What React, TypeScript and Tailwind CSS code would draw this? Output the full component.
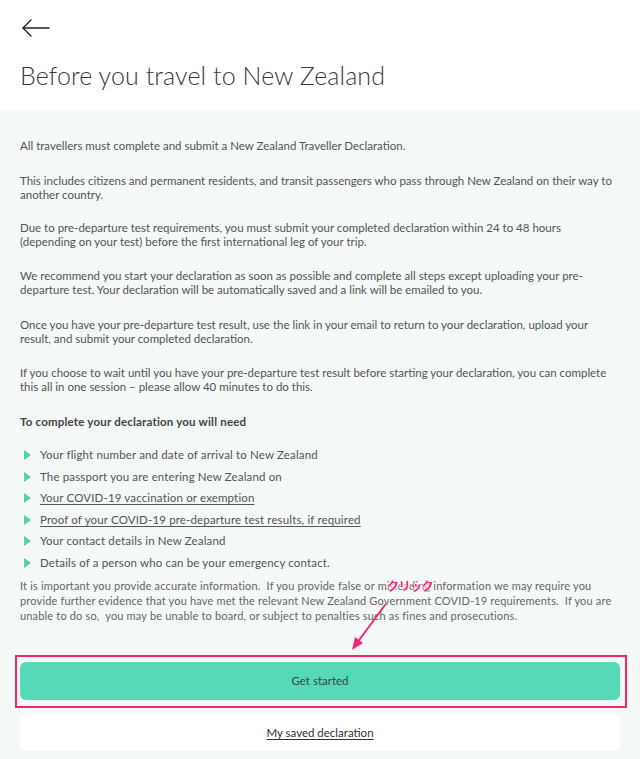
import React from 'react';

const Bullet = () => (
  <svg width="7" height="10" viewBox="0 0 7 10" className="shrink-0">
    <path d="M0 0 L7 5 L0 10 Z" fill="#4fd3ab" />
  </svg>
);

const items: { text: string; link?: boolean }[] = [
  { text: 'Your flight number and date of arrival to New Zealand' },
  { text: 'The passport you are entering New Zealand on' },
  { text: 'Your COVID-19 vaccination or exemption', link: true },
  { text: 'Proof of your COVID-19 pre-departure test results, if required', link: true },
  { text: 'Your contact details in New Zealand' },
  { text: 'Details of a person who can be your emergency contact.' },
];

export default function App() {
  return (
    <div className="relative w-[640px] h-[759px] overflow-hidden bg-[#f4f8f7] font-['Lato',_'Liberation_Sans',_sans-serif] text-[#555]">
      {/* Header */}
      <header className="h-[110px] bg-white px-5 pt-[17px]">
        <button className="block h-[22px] w-[32px] text-[#222]" aria-label="Back">
          <svg width="30" height="22" viewBox="0 0 30 22" fill="none" stroke="currentColor" strokeWidth="1.4" strokeLinecap="round" strokeLinejoin="round">
            <path d="M29 11 H3" />
            <path d="M11 3 L3 11 L11 19" />
          </svg>
        </button>
        <h1 className="mt-[21px] text-[25px] leading-[30px] font-light tracking-[0.1px] text-[#3a3a3a]">
          Before you travel to New Zealand
        </h1>
      </header>

      {/* Body */}
      <main className="px-5 pt-[29px] text-[11.5px] leading-[14.5px]">
        <p>All travellers must complete and submit a New Zealand Traveller Declaration.</p>
        <p className="mt-[20px]">
          This includes citizens and permanent residents, and transit passengers who pass through New Zealand on their way to
          <br />
          another country.
        </p>
        <p className="mt-[18px]">
          Due to pre-departure test requirements, you must submit your completed declaration within 24 to 48 hours
          <br />
          (depending on your test) before the first international leg of your trip.
        </p>
        <p className="mt-[19px]">
          We recommend you start your declaration as soon as possible and complete all steps except uploading your pre-
          <br />
          departure test. Your declaration will be automatically saved and a link will be emailed to you.
        </p>
        <p className="mt-[20px]">
          Once you have your pre-departure test result, use the link in your email to return to your declaration, upload your
          <br />
          result, and submit your completed declaration.
        </p>
        <p className="mt-[19px]">
          If you choose to wait until you have your pre-departure test result before starting your declaration, you can complete
          <br />
          this all in one session – please allow 40 minutes to do this.
        </p>

        <h2 className="mt-[20px] font-bold tracking-[0.2px] text-[#444]">To complete your declaration you will need</h2>

        <ul className="mt-[19px] flex flex-col gap-[7px] tracking-[0.15px]">
          {items.map((item) => (
            <li key={item.text} className="flex items-center gap-[9px] pl-[4px] h-[14.5px]">
              <Bullet />
              <span className={item.link ? 'underline underline-offset-2' : ''}>{item.text}</span>
            </li>
          ))}
        </ul>

        <p className="mt-[8px] text-[11px] leading-[15px] tracking-[0.17px] text-[#666]">
          It is important you provide accurate information.&nbsp; If you provide false or misleading information we may require you
          <br />
          provide further evidence that you have met the relevant New Zealand Government COVID-19 requirements.&nbsp; If you are
          <br />
          unable to do so,&nbsp; you may be unable to board, or subject to penalties such as fines and prosecutions.
        </p>
      </main>

      {/* Actions */}
      <div className="mt-[32px] ml-[15px] mr-[13px] border-2 border-[#f2266b] pl-[3px] pr-[5px] pt-[5px] pb-[6px]">
        <button className="flex h-[38px] w-full items-center justify-center rounded-[6px] bg-[#57d8b6] text-[11.5px] text-[#2f4a40]">
          Get started
        </button>
      </div>
      <div className="mt-[6px] px-5">
        <button className="flex h-[37px] w-full items-center justify-center rounded-[6px] bg-white text-[11.5px] text-[#333] underline underline-offset-2">
          My saved declaration
        </button>
      </div>

      {/* Annotation overlay */}
      <div className="pointer-events-none absolute left-[387px] top-[578px] font-['Noto_Sans_CJK_JP',_sans-serif] text-[12px] font-bold leading-[16px] tracking-[-0.5px] text-[#f0287a] [text-shadow:0_0_2px_#fff,0_0_2px_#fff,0_0_3px_#fff]">
        クリック
      </div>
      <svg className="pointer-events-none absolute left-[345px] top-[600px]" width="50" height="52" viewBox="0 0 50 52">
        <path d="M40 5 L12 43" stroke="#f0287a" strokeWidth="2" strokeLinecap="round" />
        <path d="M7 50 L10 37 L18 43 Z" fill="#f0287a" />
      </svg>
    </div>
  );
}
